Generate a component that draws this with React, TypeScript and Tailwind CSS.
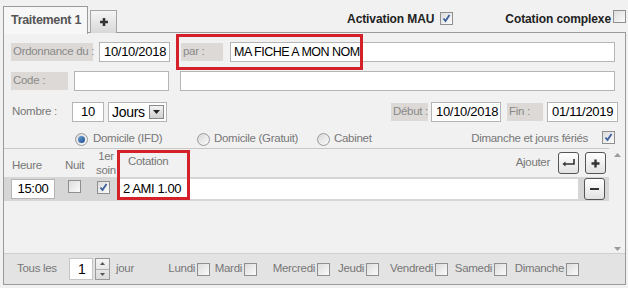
import type { ReactNode } from 'react';

// Formulaire "Traitement" façon vieille appli Windows : panneau à onglets,
// champs libellés, tableau de cotations et barre de répétition en bas.

function Check({ checked = false }: { checked?: boolean }) {
  return (
    <span className="inline-flex h-[13px] w-[13px] shrink-0 items-center justify-center border border-[#8f8f8f] bg-gradient-to-br from-[#dcdcdc] to-[#fbfbfb]">
      {checked && (
        <svg width="9" height="9" viewBox="0 0 9 9">
          <path d="M1.5 4.5 L3.5 7 L7.5 1" fill="none" stroke="#3d5f9e" strokeWidth="1.8" />
        </svg>
      )}
    </span>
  );
}

function Radio({ checked = false }: { checked?: boolean }) {
  return (
    <span className="inline-flex h-[13px] w-[13px] shrink-0 items-center justify-center rounded-full border border-[#9a9a9a] bg-gradient-to-br from-[#d8d8d8] to-[#fafafa]">
      {checked && <span className="h-[7px] w-[7px] rounded-full bg-gradient-to-br from-[#6fa0d8] to-[#1d4f8f]" />}
    </span>
  );
}

function Label({ children, w }: { children: ReactNode; w: string }) {
  return (
    <span className={`flex h-[18px] shrink-0 items-center bg-[#dcd9d6] pl-[2px] text-[#8a8a8a] ${w}`}>
      {children}
    </span>
  );
}

function Field({ value = '', w }: { value?: string; w: string }) {
  return (
    <span
      className={`flex h-[20px] shrink-0 items-center border border-[#b5b5b5] bg-white px-[4px] text-[13px] tracking-[-0.3px] text-black ${w}`}
    >
      {value}
    </span>
  );
}

function IconBtn({ children }: { children: ReactNode }) {
  return (
    <span className="flex h-[22px] w-[21px] shrink-0 items-center justify-center rounded-[3px] border border-[#555] bg-gradient-to-b from-white to-[#e2e2e2]">
      {children}
    </span>
  );
}

// Chaque jour occupe un créneau de largeur fixe, libellé calé contre sa case.
function Day({ name, w }: { name: string; w: string }) {
  return (
    <span className={`flex items-center justify-end gap-[2px] ${w}`}>
      <span>{name}</span>
      <Check />
    </span>
  );
}

export default function App() {
  return (
    <div className="relative h-[288px] w-[628px] overflow-hidden whitespace-nowrap bg-[#f1f1f1] font-['Liberation_Sans',Arial,sans-serif] text-[11.5px] tracking-[-0.3px] text-[#777]">
      <div className="flex h-[33px] items-start pl-[3px]">
        <div className="relative z-10 mt-[6px] flex h-[28px] w-[85px] items-center border border-b-0 border-[#9a9a9a] bg-[#f7f7f7] pl-[7px] text-[12.5px] font-bold tracking-[-0.3px] text-[#555]">
          Traitement 1
        </div>
        <div className="mt-[10px] ml-[2px] flex h-[23px] w-[27px] items-center justify-center border border-b-0 border-[#a5a5a5] bg-gradient-to-b from-[#f5f5f5] to-[#d8d8d8]">
          <svg width="10" height="10" viewBox="0 0 10 10">
            <path d="M5 1 V9 M1 5 H9" stroke="#333" strokeWidth="2.6" />
          </svg>
        </div>
        <div className="ml-auto mt-[10px] flex items-center pr-[2px] text-[12px] font-bold tracking-[-0.1px] text-[#222]">
          <span>Activation MAU</span>
          <span className="ml-[6px]">
            <Check checked />
          </span>
          <span className="ml-[52px]">Cotation complexe</span>
          <span className="ml-[2px]">
            <Check />
          </span>
        </div>
      </div>

      <div className="mx-[3px] -mt-px flex h-[253px] w-[623px] flex-col border border-[#9a9a9a]">
        <div className="flex flex-col gap-[9px] px-[7px] pt-[9px]">
          <div className="flex items-center">
            <Label w="w-[82px]">Ordonnance du :</Label>
            <span className="ml-[6px]">
              <Field value="10/10/2018" w="w-[71px]" />
            </span>
            <span className="ml-[11px]">
              <Label w="w-[42px]">par :</Label>
            </span>
            <span className="ml-[7px]">
              <span className="flex h-[20px] w-[385px] items-center border border-[#b5b5b5] bg-white pl-[3px] text-[12.5px] tracking-[-0.5px] text-black">
                MA FICHE A MON NOM
              </span>
            </span>
          </div>
          <div className="flex items-center">
            <Label w="w-[57px]">Code :</Label>
            <span className="ml-[6px]">
              <Field w="w-[95px]" />
            </span>
            <span className="ml-[11px]">
              <Field w="w-[435px]" />
            </span>
          </div>
        </div>

        <div className="mt-[11px] flex items-center px-[7px]">
          <span className="w-[61px] pl-[1px]">Nombre :</span>
          <Field value="10" w="w-[32px] justify-center" />
          <span className="ml-[4px] flex h-[20px] w-[59px] items-center justify-between border border-[#b5b5b5] bg-white pl-[3px] pr-[2px] text-[14px] text-black">
            Jours
            <span className="flex h-[14px] w-[15px] items-center justify-center border border-[#888] bg-gradient-to-b from-[#f4f4f4] to-[#cfcfcf]">
              <svg width="7" height="4" viewBox="0 0 7 4">
                <path d="M0 0 H7 L3.5 4 Z" fill="#222" />
              </svg>
            </span>
          </span>
          <span className="ml-auto flex items-center">
            <Label w="w-[37px]">Début :</Label>
            <span className="ml-[3px]">
              <Field value="10/10/2018" w="w-[70px]" />
            </span>
            <span className="ml-[6px]">
              <Label w="w-[36px]">Fin :</Label>
            </span>
            <span className="ml-[4px]">
              <Field value="01/11/2019" w="w-[71px]" />
            </span>
          </span>
        </div>

        <div className="mt-[9px] flex h-[16px] items-center pl-[71px] pr-[10px]">
          <Radio checked />
          <span className="ml-[5px] w-[104px]">Domicile (IFD)</span>
          <Radio />
          <span className="ml-[4px] w-[103px]">Domicile (Gratuit)</span>
          <Radio />
          <span className="ml-[4px]">Cabinet</span>
          <span className="ml-auto">Dimanche et jours fériés</span>
          <span className="ml-[14px]">
            <Check checked />
          </span>
        </div>

        <div className="mt-[1px] flex min-h-0 flex-1">
          <div className="flex w-[605px] flex-col border-t border-[#c8c8c8]">
            <div className="flex h-[28px] items-center pl-[8px] pr-[3px]">
              <span className="mt-[5px] w-[53px]">Heure</span>
              <span className="mt-[5px] w-[28px]">Nuit</span>
              <span className="w-[26px] text-center leading-[14px]">
                1er
                <br />
                soin
              </span>
              <span className="ml-[9px] -mt-[3px]">Cotation</span>
              <span className="ml-auto">Ajouter</span>
              <span className="ml-[8px]">
                <IconBtn>
                  <svg width="13" height="8" viewBox="0 0 13 8">
                    <path d="M12 0 V5 H2" fill="none" stroke="#333" strokeWidth="1.6" />
                    <path d="M0.5 5 L3.5 2.5 V7.5 Z" fill="#333" />
                  </svg>
                </IconBtn>
              </span>
              <span className="ml-[6px]">
                <IconBtn>
                  <svg width="9" height="9" viewBox="0 0 9 9">
                    <path d="M4.5 0.5 V8.5 M0.5 4.5 H8.5" stroke="#333" strokeWidth="2.4" />
                  </svg>
                </IconBtn>
              </span>
            </div>
            <div className="flex h-[24px] items-center bg-[#d6d6d6] pl-[7px] pr-[3px]">
              <Field value="15:00" w="w-[44px] justify-center" />
              <span className="ml-[13px]">
                <Check />
              </span>
              <span className="ml-[16px]">
                <Check checked />
              </span>
              <span className="ml-[10px] flex h-[20px] w-[458px] items-center bg-white pl-[3px] text-[13px] tracking-[-0.4px] text-black">
                2 AMI 1.00
              </span>
              <span className="ml-[6px]">
                <IconBtn>
                  <span className="h-[2px] w-[9px] bg-[#333]" />
                </IconBtn>
              </span>
            </div>
            <div className="flex-1" />
          </div>
          <div className="flex flex-1 flex-col items-center justify-between pt-[5px] pb-[2px]">
            <svg width="7" height="4" viewBox="0 0 7 4">
              <path d="M0 4 L3.5 0 L7 4 Z" fill="#9a9a9a" />
            </svg>
            <svg width="7" height="4" viewBox="0 0 7 4">
              <path d="M0 0 H7 L3.5 4 Z" fill="#9a9a9a" />
            </svg>
          </div>
        </div>

        <div className="flex h-[31px] shrink-0 items-center border-t border-[#cfcfcf] bg-[#e3e3e3] pl-[13px]">
          <span className="w-[52px]">Tous les</span>
          <span className="flex h-[22px] w-[24px] items-center border border-[#c5c5c5] bg-white pl-[8px] text-[14px] text-black">
            1
          </span>
          <span className="ml-[2px] flex h-[22px] w-[15px] flex-col border border-[#9a9a9a] bg-gradient-to-b from-[#f4f4f4] to-[#dadada]">
            <span className="flex flex-1 items-center justify-center border-b border-[#b0b0b0]">
              <svg width="5" height="3" viewBox="0 0 5 3">
                <path d="M0 3 L2.5 0 L5 3 Z" fill="#555" />
              </svg>
            </span>
            <span className="flex flex-1 items-center justify-center">
              <svg width="5" height="3" viewBox="0 0 5 3">
                <path d="M0 0 H5 L2.5 3 Z" fill="#555" />
              </svg>
            </span>
          </span>
          <span className="ml-[6px] w-[50px]">jour</span>
          <Day name="Lundi" w="w-[44px]" />
          <Day name="Mardi" w="w-[47px]" />
          <Day name="Mercredi" w="w-[73px]" />
          <Day name="Jeudi" w="w-[49px]" />
          <Day name="Vendredi" w="w-[69px]" />
          <Day name="Samedi" w="w-[59px]" />
          <Day name="Dimanche" w="w-[72px]" />
        </div>
      </div>

      {/* Encadrés rouges d'annotation posés par-dessus la capture */}
      <div className="pointer-events-none absolute left-[176px] top-[34px] h-[36px] w-[187px] border-[3px] border-[#d32029]" />
      <div className="pointer-events-none absolute left-[117px] top-[150px] h-[50px] w-[73px] border-[3px] border-[#d32029]" />
    </div>
  );
}
